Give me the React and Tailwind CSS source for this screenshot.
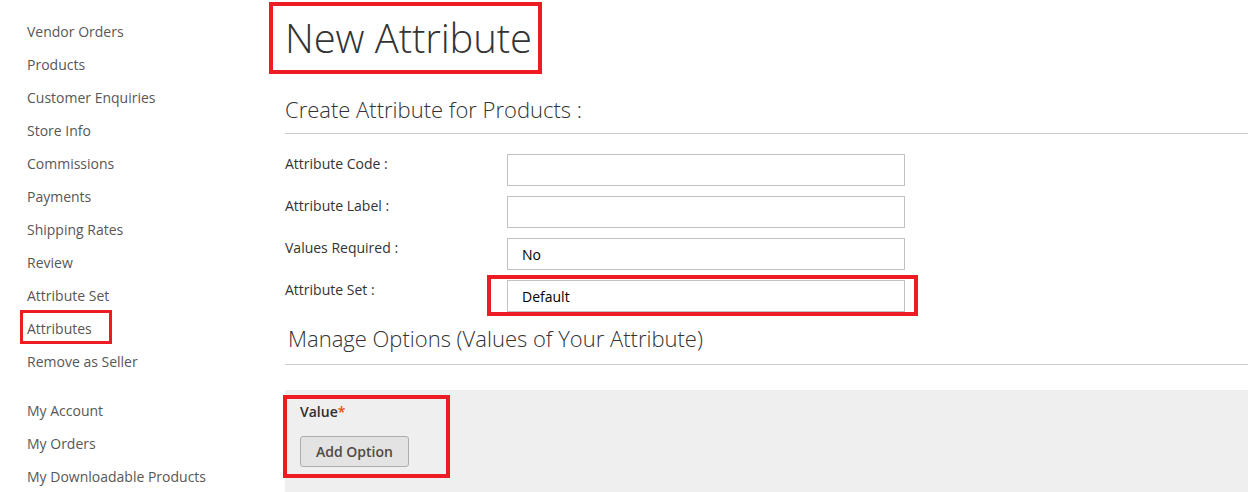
const sideLinks = [
    "Vendor Orders",
    "Products",
    "Customer Enquiries",
    "Store Info",
    "Commissions",
    "Payments",
    "Shipping Rates",
    "Review",
    "Attribute Set",
    "Attributes",
    "Remove as Seller",
];

const accountLinks = ["My Account", "My Orders", "My Downloadable Products"];

const fields = [
    { label: "Attribute Code :", value: "" },
    { label: "Attribute Label :", value: "" },
    { label: "Values Required :", value: "No" },
    { label: "Attribute Set :", value: "Default", marked: true },
];

// red annotation frame drawn over the screenshot
const redBox = "pointer-events-none absolute border-4 border-[#ed1c24]";

export default function App() {
    return (
        <div className="flex min-h-screen bg-white font-['Open_Sans',sans-serif] text-[#333]">
            {/* SIDEBAR */}
            <aside className="w-[258px] shrink-0 pl-[27px] pt-[15px]">
                <ul className="text-[14px] leading-[33px] text-[#575757]">
                    {sideLinks.map((link) => (
                        <li key={link} className="relative">
                            {link}
                            {link === "Attributes" && (
                                <span className={`${redBox} -left-[7px] top-[-2px] h-[34px] w-[92px] border-[3px]`} />
                            )}
                        </li>
                    ))}
                </ul>
                <ul className="mt-[16px] text-[14px] leading-[33px] text-[#575757]">
                    {accountLinks.map((link) => (
                        <li key={link}>{link}</li>
                    ))}
                </ul>
            </aside>

            {/* MAIN */}
            <main className="flex-1 pl-[27px] pr-[11px]">
                <div className="relative pt-[6px]">
                    <h1 className="text-[40px] font-light leading-[64px] tracking-[-0.1px] text-[#333]">
                        New Attribute
                    </h1>
                    <span className={`${redBox} -left-[16px] top-[2px] h-[72px] w-[273px]`} />
                </div>

                <div className="mt-[24px] border-b border-[#ccc] pb-[9px]">
                    <h2 className="text-[22px] font-light leading-[30px] text-[#333]">
                        Create Attribute for Products :
                    </h2>
                </div>

                <div className="mt-[20px] space-y-[10px]">
                    {fields.map((field) => (
                        <div key={field.label} className="flex">
                            <label className="w-[222px] text-[14px] leading-[20px] text-[#333]">
                                {field.label}
                            </label>
                            <div className="relative">
                                <div className="flex h-[32px] w-[398px] items-center border border-[#c2c2c2] bg-white pl-[14px] text-[14px] text-black">
                                    {field.value}
                                </div>
                                {field.marked && (
                                    <span className={`${redBox} -left-[20px] -top-[5px] h-[41px] w-[431px]`} />
                                )}
                            </div>
                        </div>
                    ))}
                </div>

                <div className="mt-[11px] border-b border-[#ccc] pb-[11px] pl-[3px]">
                    <h2 className="text-[22px] font-light leading-[30px] text-[#333]">
                        Manage Options (Values of Your Attribute)
                    </h2>
                </div>

                <div className="relative mt-[25px] bg-[#efefef] pb-[30px] pl-[15px] pt-[12px]">
                    <p className="text-[14px] font-semibold leading-[20px] text-[#303030]">
                        Value<span className="text-[#eb5202]">*</span>
                    </p>
                    <button
                        type="button"
                        className="mt-[14px] h-[31px] w-[109px] rounded-[3px] border border-[#adadad] bg-[#e3e3e3] text-[14px] font-semibold text-[#514943]"
                    >
                        Add Option
                    </button>
                    <span className={`${redBox} -left-[2px] top-[5px] h-[83px] w-[167px]`} />
                </div>
            </main>
        </div>
    );
}
